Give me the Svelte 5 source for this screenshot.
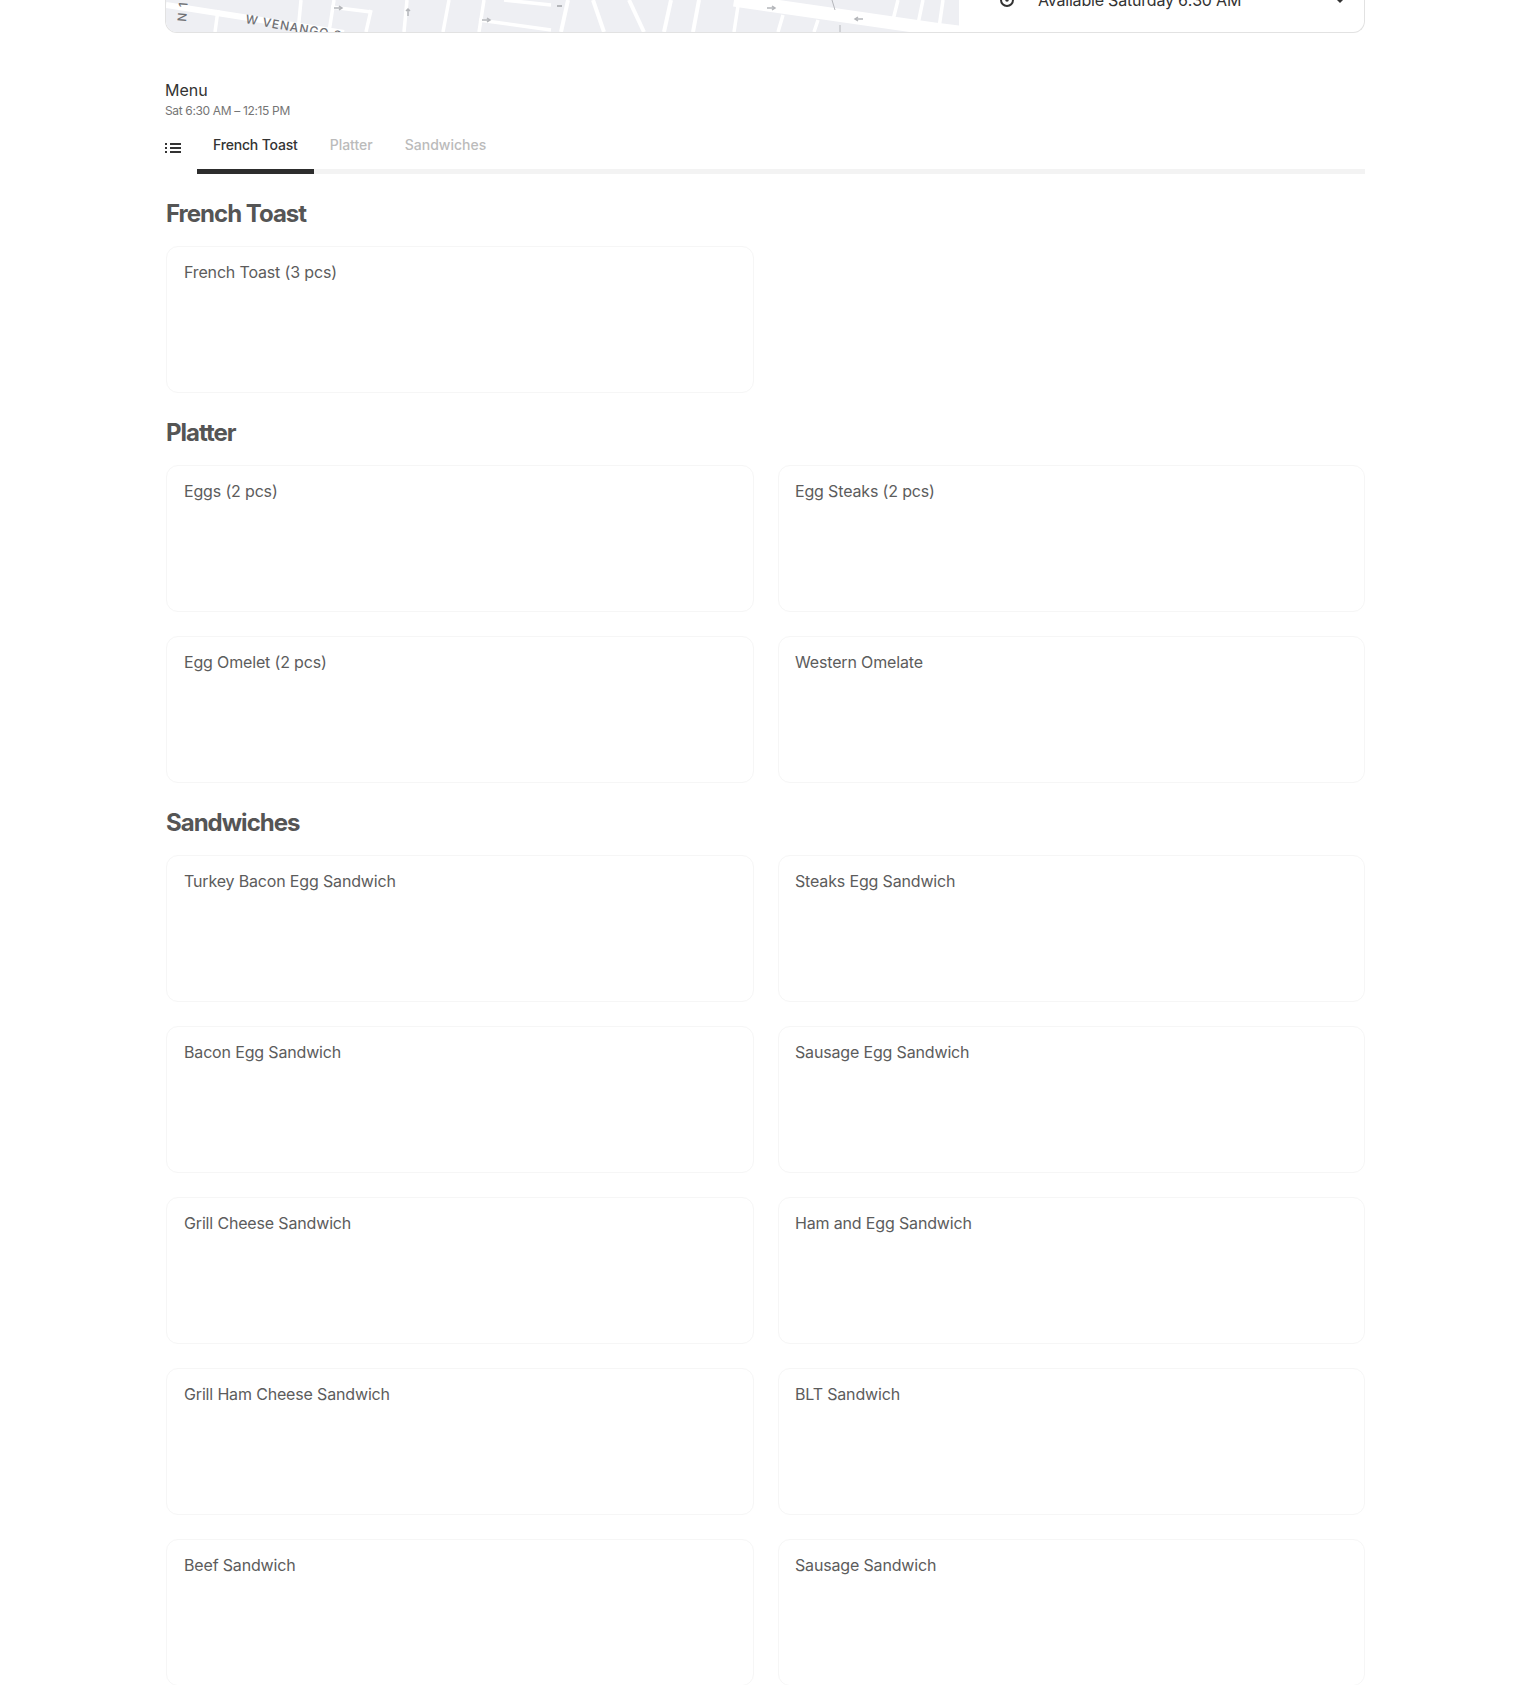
<script>
  const sections = [
    { title: 'French Toast', items: ['French Toast (3 pcs)'] },
    { title: 'Platter', items: ['Eggs (2 pcs)', 'Egg Steaks (2 pcs)', 'Egg Omelet (2 pcs)', 'Western Omelate'] },
    {
      title: 'Sandwiches',
      items: [
        'Turkey Bacon Egg Sandwich', 'Steaks Egg Sandwich',
        'Bacon Egg Sandwich', 'Sausage Egg Sandwich',
        'Grill Cheese Sandwich', 'Ham and Egg Sandwich',
        'Grill Ham Cheese Sandwich', 'BLT Sandwich',
        'Beef Sandwich', 'Sausage Sandwich'
      ]
    }
  ];
  const tabs = ['French Toast', 'Platter', 'Sandwiches'];
</script>

<main>
  <div class="store-card">
    <div class="map">
      <svg width="793" height="32" viewBox="0 0 793 32">
        <rect width="793" height="32" fill="#eeeff3" />
        <g stroke="#fff" fill="none">
          <path d="M0 5 L178 33" stroke-width="6" />
          <path d="M52 10 L49 32 M135 0 L132 32 M168 0 L163 32 M205 10 L200 32 M241 0 L238 32 M283 0 L277 32 M318 0 L313 32" stroke-width="3.5" />
          <path d="M165 7 L205 12 M313 20 L385 30 M338 0 L385 5" stroke-width="3.5" />
          <path d="M402 0 L395 32 M427 0 L438 32 M463 0 L478 32 M505 0 L498 32 M533 0 L527 32" stroke-width="4" />
          <path d="M568 0 L768 29 L800 33" stroke-width="13" />
          <path d="M572 6 L568 32 M617 15 L612 32 M652 20 L648 32 M732 0 L727 20 M757 0 L752 24 M777 0 L773 28" stroke-width="3.5" />
        </g>
        <g stroke="#b4b6ba" stroke-width="1.5" fill="none">
          <path d="M168 8 h8 M173 6 l3 2 l-3 2" />
          <path d="M242 16 v-7 M240 11 l2 -2 l2 2" />
          <path d="M316 20 h8 M321 18 l3 2 l-3 2" />
          <path d="M391 6 h5" stroke-width="2" />
          <path d="M601 8 h8 M606 6 l3 2 l-3 2" />
          <path d="M697 19 h-8 M692 17 l-3 2 l3 2" />
          <path d="M666 0 l3 10" stroke-width="1" />
          <path d="M674 25 v7" stroke-width="1" />
        </g>
        <text class="map-label" transform="translate(20 22) rotate(-85)">N 1</text>
        <text class="map-label" transform="translate(79 23) rotate(10)">W VENANGO S</text>
      </svg>
    </div>
    <div class="hours">
      <svg class="clock" width="16" height="16" viewBox="0 0 16 16">
        <circle cx="8" cy="0" r="6" fill="none" stroke="#333" stroke-width="2" />
        <circle cx="8" cy="0" r="1.8" fill="#333" />
      </svg>
      <span class="hours-text">Available Saturday 6:30 AM</span>
      <svg class="chev" width="12" height="8" viewBox="0 0 12 8">
        <path d="M3 0 L6 3 L9 0 Z" fill="#333" />
      </svg>
    </div>
  </div>

  <div class="menu-head">
    <div class="menu-title">Menu</div>
    <div class="menu-hours">Sat 6:30 AM – 12:15 PM</div>
  </div>

  <div class="tabbar">
    <svg class="list-icon" width="16" height="12" viewBox="0 0 16 12">
      <path d="M0 1h2v2H0zM5 1h11v2H5zM0 5h2v2H0zM5 5h11v2H5zM0 9h2v2H0zM5 9h11v2H5z" fill="#333" />
    </svg>
    <div class="tabs">
      {#each tabs as tab, i}
        <div class="tab" class:active={i === 0}>{tab}</div>
      {/each}
    </div>
  </div>

  {#each sections as section}
    <section>
      <h2>{section.title}</h2>
      <div class="grid">
        {#each section.items as item}
          <div class="card">{item}</div>
        {/each}
      </div>
    </section>
  {/each}
</main>

<style>
  :global(body) {
    margin: 0;
    background: #fff;
  }
  main {
    width: 1200px;
    height: 1685px;
    margin: 0 auto;
    overflow: hidden;
    box-sizing: border-box;
    font-family: Inter, "Liberation Sans", sans-serif;
    color: #555;
  }
  .store-card {
    display: flex;
    height: 33px;
    box-sizing: border-box;
    border: 1px solid #e2e2e2;
    border-top: none;
    border-radius: 0 0 12px 12px;
    overflow: hidden;
  }
  .map {
    width: 793px;
    height: 32px;
    flex: none;
  }
  .map svg {
    display: block;
  }
  .map-label {
    font-size: 12px;
    font-weight: 500;
    fill: #6f7074;
    letter-spacing: 1px;
  }
  .hours {
    flex: 1;
    display: flex;
    align-items: flex-start;
    padding-left: 40px;
    padding-right: 18px;
    color: #333;
  }
  .clock {
    flex: none;
    margin-right: 23px;
  }
  .hours-text {
    font-size: 16px;
    letter-spacing: -0.2px;
    line-height: 20px;
    margin-top: -10px;
    flex: 1;
  }
  .chev {
    flex: none;
  }
  .menu-head {
    margin-top: 47px;
  }
  .menu-title {
    font-size: 16px;
    line-height: 20px;
    color: #333;
  }
  .menu-hours {
    font-size: 12px;
    letter-spacing: -0.35px;
    line-height: 16px;
    margin-top: 3px;
    color: #757575;
  }
  .tabbar {
    display: flex;
    margin-top: 6px;
  }
  .list-icon {
    margin-top: 17px;
    margin-right: 16px;
    flex: none;
  }
  .tabs {
    flex: 1;
    display: flex;
    border-bottom: 5px solid #f3f3f3;
    height: 44px;
  }
  .tab {
    padding: 0 16px;
    font-size: 14px;
    line-height: 40px;
    height: 44px;
    color: #bbb;
    font-weight: 500;
  }
  .tab.active {
    color: #333;
    letter-spacing: -0.18px;
    border-bottom: 5px solid #2d2d2d;
  }
  section {
    padding-left: 1px;
  }
  h2 {
    margin: 23px 0 0;
    padding-top: 1px;
    font-size: 24px;
    letter-spacing: -1px;
    line-height: 32px;
    font-weight: 700;
    color: #555;
  }
  .grid {
    display: grid;
    grid-template-columns: 588px 587px;
    column-gap: 24px;
    row-gap: 24px;
    margin-top: 16px;
  }
  .card {
    height: 147px;
    box-sizing: border-box;
    border: 1px solid #f6f6f6;
    border-radius: 12px;
    padding: 15px 17px;
    font-size: 16px;
    letter-spacing: -0.16px;
    line-height: 20px;
    color: #5c5c5c;
  }
  .card:nth-child(even) {
    padding-left: 16px;
  }
</style>
